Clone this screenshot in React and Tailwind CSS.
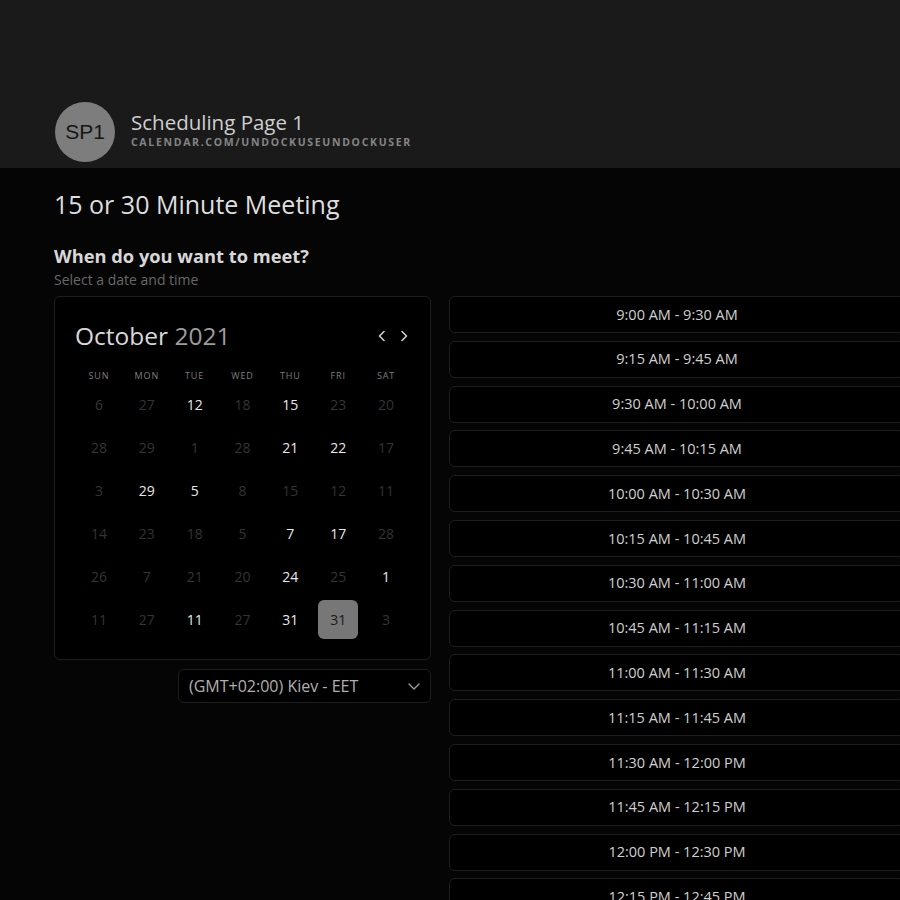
import React from "react";

const days = ["SUN", "MON", "TUE", "WED", "THU", "FRI", "SAT"];

// [label, state] state: 0 dim, 1 available, 2 selected
const weeks = [
  [["6", 0], ["27", 0], ["12", 1], ["18", 0], ["15", 1], ["23", 0], ["20", 0]],
  [["28", 0], ["29", 0], ["1", 0], ["28", 0], ["21", 1], ["22", 1], ["17", 0]],
  [["3", 0], ["29", 1], ["5", 1], ["8", 0], ["15", 0], ["12", 0], ["11", 0]],
  [["14", 0], ["23", 0], ["18", 0], ["5", 0], ["7", 1], ["17", 1], ["28", 0]],
  [["26", 0], ["7", 0], ["21", 0], ["20", 0], ["24", 1], ["25", 0], ["1", 1]],
  [["11", 0], ["27", 0], ["11", 1], ["27", 0], ["31", 1], ["31", 2], ["3", 0]],
];

const slots = [
  "9:00 AM - 9:30 AM",
  "9:15 AM - 9:45 AM",
  "9:30 AM - 10:00 AM",
  "9:45 AM - 10:15 AM",
  "10:00 AM - 10:30 AM",
  "10:15 AM - 10:45 AM",
  "10:30 AM - 11:00 AM",
  "10:45 AM - 11:15 AM",
  "11:00 AM - 11:30 AM",
  "11:15 AM - 11:45 AM",
  "11:30 AM - 12:00 PM",
  "11:45 AM - 12:15 PM",
  "12:00 PM - 12:30 PM",
  "12:15 PM - 12:45 PM",
];

const Chevron = ({ dir }) => (
  <svg width="12" height="14" viewBox="0 0 12 14" fill="none" stroke="#d0d0d0" strokeWidth="1.6" strokeLinecap="round" strokeLinejoin="round">
    {dir === "left" ? <path d="M8 2.5 L3.5 7 L8 11.5" /> : <path d="M4 2.5 L8.5 7 L4 11.5" />}
  </svg>
);

export default function App() {
  return (
    <div className="w-[900px] h-[900px] overflow-hidden bg-[#050505] font-['Open_Sans',sans-serif]">
      {/* header */}
      <div className="h-[168px] bg-[#1a1a1a] px-[55px] pt-[102px] flex items-start gap-4">
        <div className="w-[60px] h-[60px] rounded-full bg-[#7d7d7d] flex items-center justify-center font-['Liberation_Sans',sans-serif] text-[21px] text-[#161616]">
          SP1
        </div>
        <div className="pt-[7px]">
          <div className="text-[20.5px] leading-[26px] text-[#cfcfcf]">Scheduling Page 1</div>
          <div className="text-[10.5px] leading-[14px] font-bold tracking-[0.16em] text-[#858585]">
            CALENDAR.COM/UNDOCKUSEUNDOCKUSER
          </div>
        </div>
      </div>

      {/* main */}
      <div className="pl-[54px] pt-5">
        <h1 className="text-[25px] leading-[32px] text-[#dedede]">15 or 30 Minute Meeting</h1>
        <h2 className="mt-6 text-[18.3px] leading-[24px] font-bold text-[#d8d8d8]">When do you want to meet?</h2>
        <p className="mt-[2px] text-[14px] leading-[20px] text-[#686868]">Select a date and time</p>

        <div className="mt-[6px] flex gap-[18px] items-start">
          <div className="w-[377px] shrink-0">
            <div className="bg-black border border-[#1e1e1e] rounded-md px-5 pt-[23px] pb-[18px]">
              <div className="flex items-center justify-between">
                <div className="text-[24.5px] leading-[32px] text-[#d8d8d8]">
                  October <span className="text-[#9c9c9c]">2021</span>
                </div>
                <div className="flex items-center gap-[10px]">
                  <Chevron dir="left" />
                  <Chevron dir="right" />
                </div>
              </div>
              <div className="grid grid-cols-7 mt-[17px]">
                {days.map((d) => (
                  <div key={d} className="text-center text-[9px] leading-[14px] tracking-[0.1em] text-[#7e7e7e]">
                    {d}
                  </div>
                ))}
              </div>
              <div className="grid grid-cols-7">
                {weeks.flat().map(([n, s], i) => (
                  <div key={i} className="h-[43px] flex items-center justify-center">
                    {s === 2 ? (
                      <div className="w-[40px] h-[39px] rounded-md bg-[#777777] flex items-center justify-center text-[14px] text-[#1a1a1a]">
                        {n}
                      </div>
                    ) : (
                      <span className={s === 1 ? "text-[14px] text-[#e8e8e8]" : "text-[14px] text-[#343434]"}>{n}</span>
                    )}
                  </div>
                ))}
              </div>
            </div>
            <div className="mt-[9px] flex justify-end">
              <div className="w-[253px] h-[34px] border border-[#1e1e1e] rounded-md bg-black flex items-center justify-between pl-[10px] pr-[8px]">
                <span className="text-[16px] text-[#b0b0b0]">(GMT+02:00) Kiev - EET</span>
                <svg width="16" height="16" viewBox="0 0 16 16" fill="none" stroke="#9a9a9a" strokeWidth="1.4" strokeLinecap="round" strokeLinejoin="round">
                  <path d="M3 6 L8 11 L13 6" />
                </svg>
              </div>
            </div>
          </div>

          <div className="w-[456px] shrink-0 flex flex-col gap-[7.8px]">
            {slots.map((t) => (
              <div key={t} className="h-[37px] bg-black border border-[#1e1e1e] rounded-md flex items-center justify-center text-[14.5px] text-[#d0d0d0]">
                {t}
              </div>
            ))}
          </div>
        </div>
      </div>
    </div>
  );
}
